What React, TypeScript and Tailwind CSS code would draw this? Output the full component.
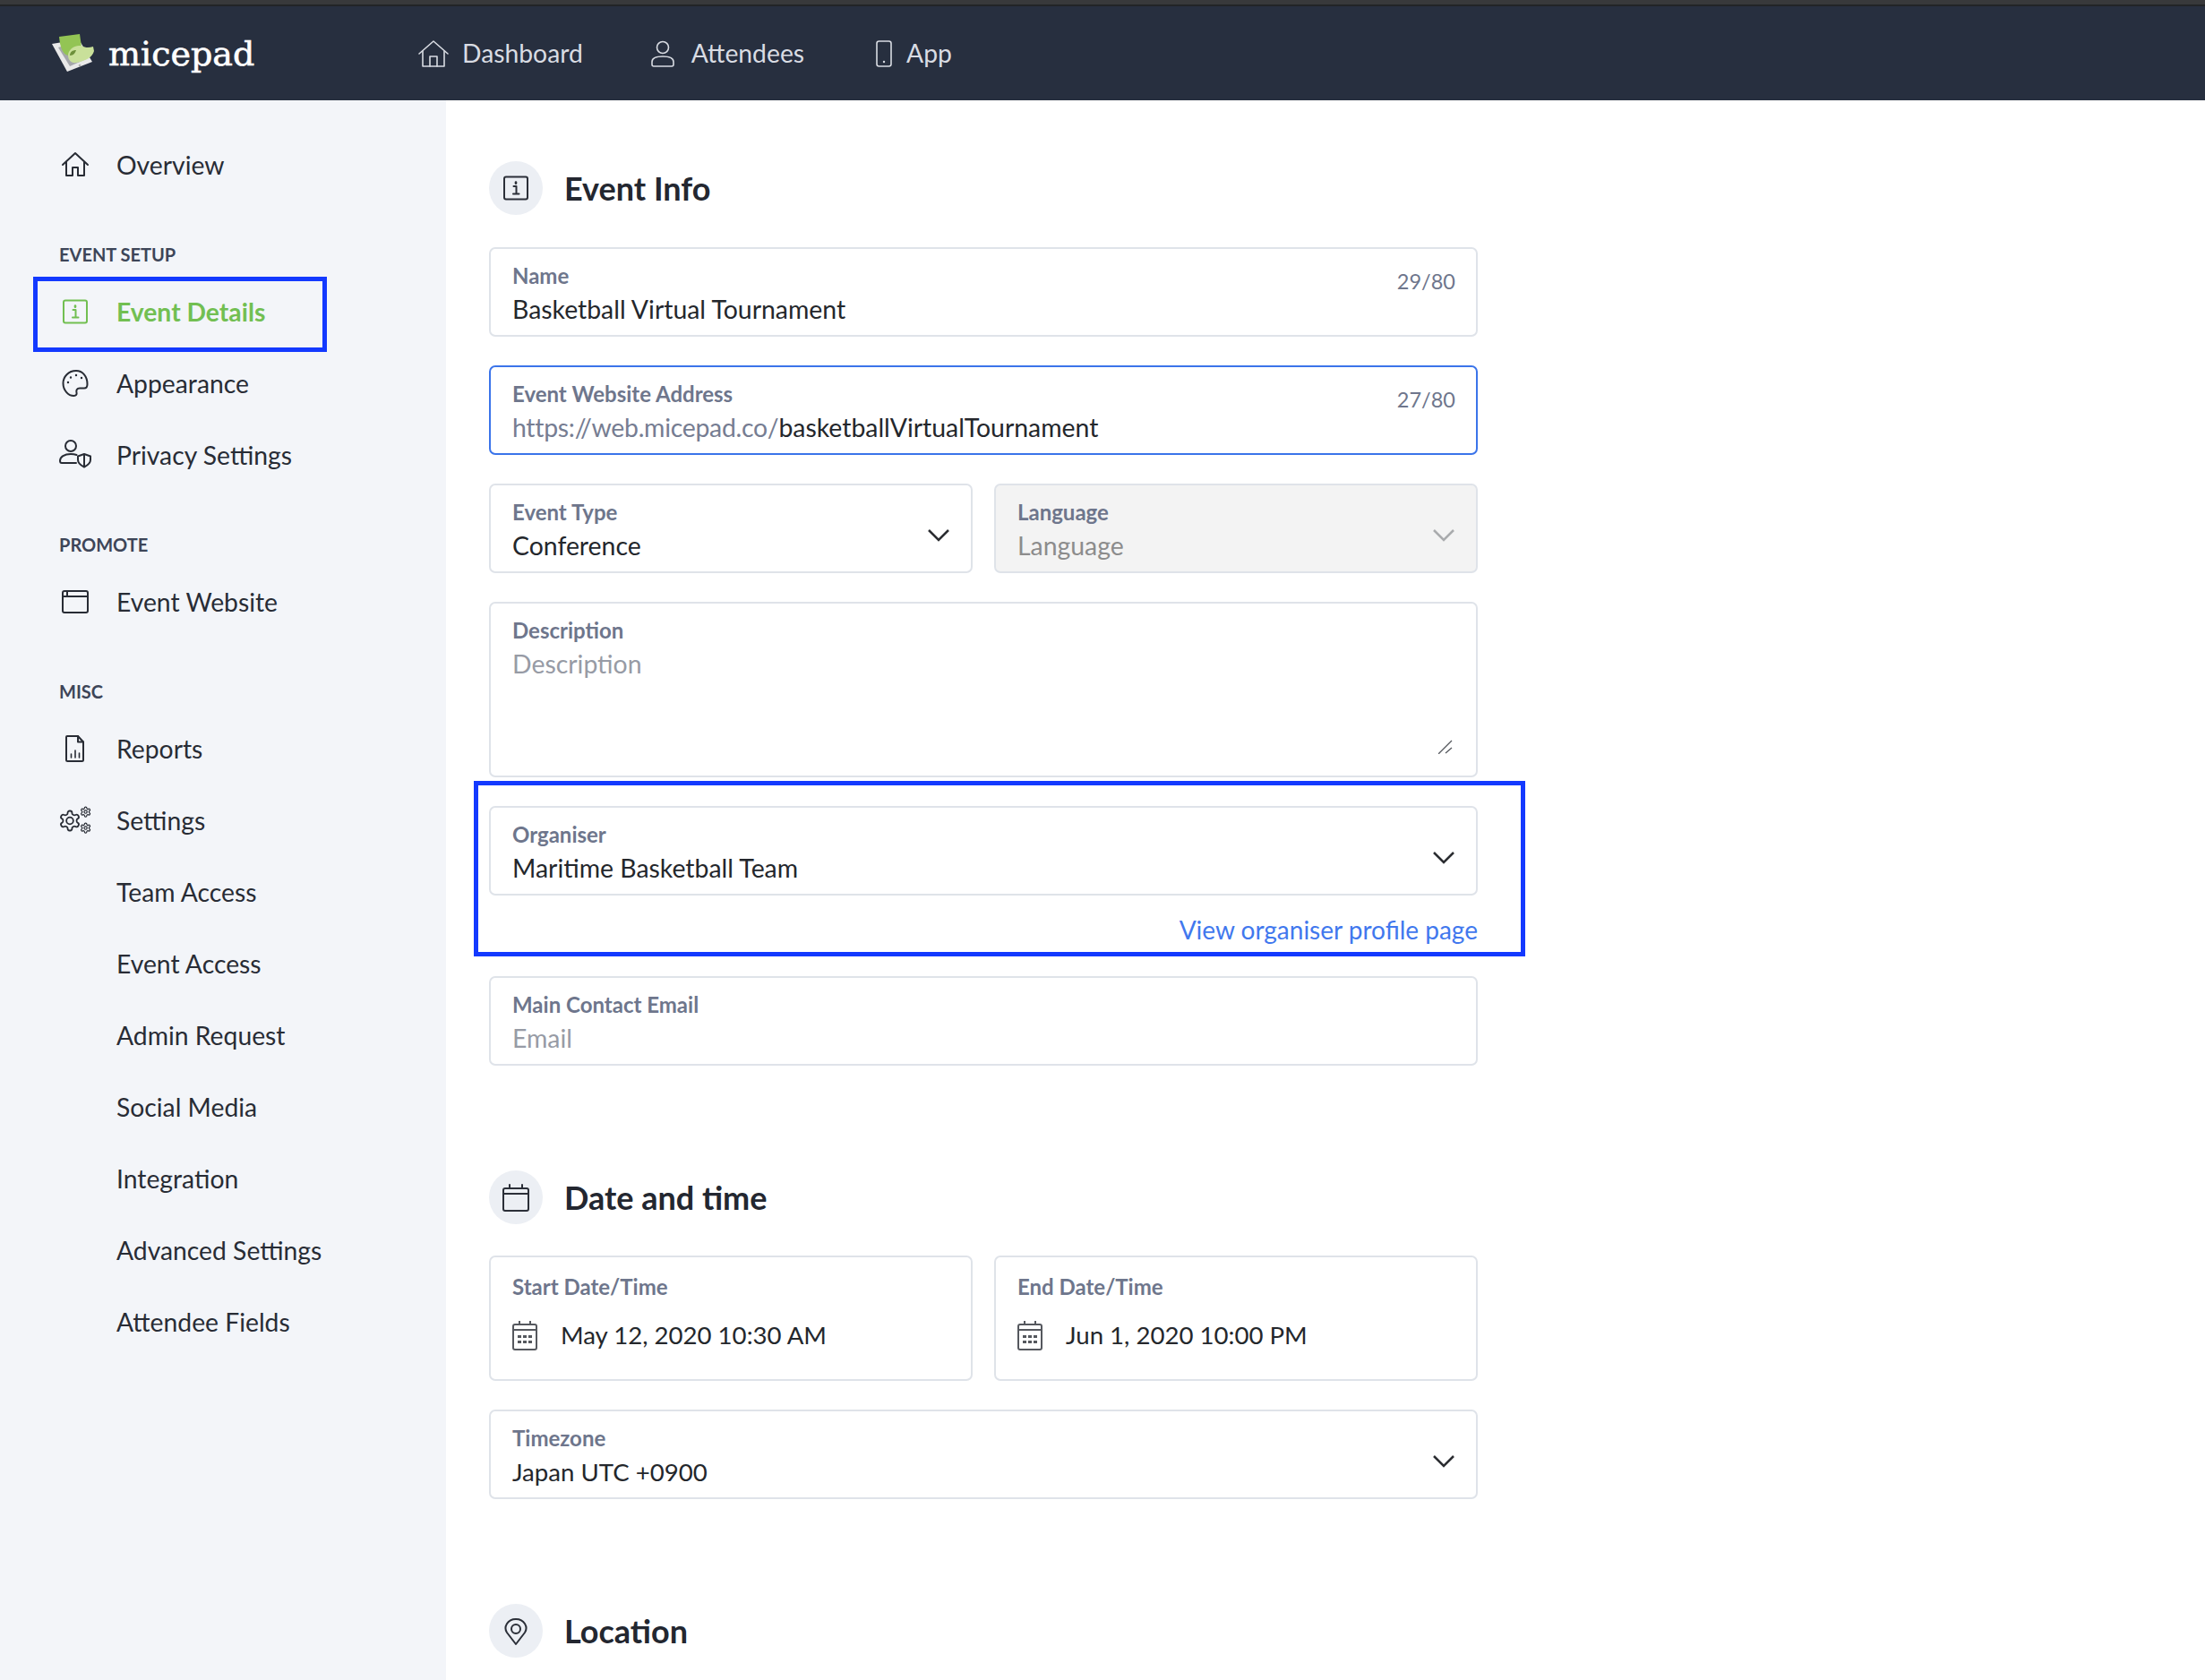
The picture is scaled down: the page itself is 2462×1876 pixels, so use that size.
import type { ReactNode } from "react";

const stroke = {
  fill: "none",
  stroke: "currentColor",
  strokeWidth: 2,
  strokeLinecap: "round" as const,
  strokeLinejoin: "round" as const,
};

const gearPath =
  "M12.22 2h-.44a2 2 0 0 0-2 2v.18a2 2 0 0 1-1 1.73l-.43.25a2 2 0 0 1-2 0l-.15-.08a2 2 0 0 0-2.73.73l-.22.38a2 2 0 0 0 .73 2.73l.15.1a2 2 0 0 1 1 1.72v.51a2 2 0 0 1-1 1.74l-.15.09a2 2 0 0 0-.73 2.73l.22.38a2 2 0 0 0 2.73.73l.15-.08a2 2 0 0 1 2 0l.43.25a2 2 0 0 1 1 1.73V20a2 2 0 0 0 2 2h.44a2 2 0 0 0 2-2v-.18a2 2 0 0 1 1-1.73l.43-.25a2 2 0 0 1 2 0l.15.08a2 2 0 0 0 2.73-.73l.22-.39a2 2 0 0 0-.73-2.73l-.15-.08a2 2 0 0 1-1-1.74v-.5a2 2 0 0 1 1-1.74l.15-.09a2 2 0 0 0 .73-2.73l-.22-.38a2 2 0 0 0-2.73-.73l-.15.08a2 2 0 0 1-2 0l-.43-.25a2 2 0 0 1-1-1.73V4a2 2 0 0 0-2-2z";

function Icon36({ children }: { children: ReactNode }) {
  return (
    <svg viewBox="0 0 36 36" className="w-9 h-9 shrink-0" {...stroke}>
      {children}
    </svg>
  );
}

const HomeIcon = () => (
  <Icon36>
    <path d="M4 18 18 5l14 13" />
    <path d="M8 15v15h7v-9h6v9h7V15" />
  </Icon36>
);

// header variant: thinner, bigger roof, small door
const NavHomeIcon = () => (
  <svg viewBox="0 0 36 36" className="w-9 h-9 shrink-0" {...stroke} strokeWidth={1.6}>
    <path d="M2 18 18 4l16 14" />
    <path d="M6 15v17h24V15" />
    <path d="M14 32V21h8v11" />
  </svg>
);

const InfoIcon = () => (
  <Icon36>
    <rect x="5" y="5.500" width="26" height="25" rx="2" />
    <path d="M15.500 16h3v8.500M15 24.500h6.500" />
    <path d="M18 11.500v1.200" strokeWidth="2.600" />
  </Icon36>
);

const PaletteIcon = () => (
  <Icon36>
    <path d="M19 4C10.500 4 4.500 10.500 4.500 18c0 7.500 5.500 14 12 14 2.500 0 3.500-1.700 3-3.500-.7-2.500.3-5 3.500-5h5c2 0 3.500-1.500 3.500-4.500C31.500 10 26 4 19 4z" />
    <path d="M10 17v.1M13 11.500v.1M19 9v.1M25 12v.1" strokeWidth="2.400" />
  </Icon36>
);

const PrivacyIcon = () => (
  <Icon36>
    <circle cx="13" cy="8" r="6" />
    <path d="M19 27H3c-1.500 0-2-1-2-2.500C1 20 6 17 13 17c2.500 0 4.500.3 6.500 1" />
    <path d="M28 17l7 2.500v4c0 3.500-3 6-7 8-4-2-7-4.500-7-8v-4z" />
    <path d="M28 18v13" />
  </Icon36>
);

const BrowserIcon = () => (
  <Icon36>
    <rect x="4" y="6" width="28" height="24" rx="2" />
    <path d="M4 12h28M9 6v6" />
  </Icon36>
);

const ReportIcon = () => (
  <Icon36>
    <path d="M9 4h12l6 6.500V30.500a1.500 1.500 0 0 1-1.500 1.500h-16A1.500 1.500 0 0 1 8 30.500V5a1 1 0 0 1 1-1z" />
    <path d="M21 4v6.500h6" />
    <path d="M13.500 28v-4M18 28v-8M22.500 28v-5" strokeWidth="1.600" />
  </Icon36>
);

const Gear = ({ x, y, s, r, w }: { x: number; y: number; s: number; r: number; w: number }) => (
  <g transform={`translate(${x} ${y}) scale(${s})`} strokeWidth={w / s}>
    <path d={gearPath} />
    <circle cx="12" cy="12" r={r} />
  </g>
);

const SettingsIcon = () => (
  <Icon36>
    <Gear x={-1.200} y={5.300} s={1.100} r={3.500} w={1.800} />
    <Gear x={23} y={2} s={0.550} r={3} w={1.200} />
    <Gear x={23} y={20} s={0.550} r={3} w={1.200} />
  </Icon36>
);

const CalendarOutline = () => (
  <Icon36>
    <rect x="4" y="8" width="28" height="25" rx="2" />
    <path d="M4 14h28M11 4v4M25 4v4" />
  </Icon36>
);

const PinIcon = () => (
  <Icon36>
    <path d="M18 33 8 20c-4-6 .5-15 10-15s14 9 10 15z" />
    <circle cx="18" cy="16" r="5" />
  </Icon36>
);

const PersonIcon = () => (
  <svg viewBox="0 0 36 36" className="w-9 h-9 shrink-0" {...stroke} strokeWidth={1.6}>
    <circle cx="18" cy="11" r="6.500" />
    <path d="M8 32h20a2 2 0 0 0 2-2v-3c0-3.500-3-6-12-6S6 23.500 6 27v3a2 2 0 0 0 2 2z" />
  </svg>
);

const PhoneIcon = () => (
  <svg viewBox="0 0 36 36" className="w-9 h-9 shrink-0" {...stroke} strokeWidth={1.6}>
    <rect x="10" y="4" width="16" height="28" rx="2.500" />
    <path d="M18 27v.1" strokeWidth="2.400" />
  </svg>
);

function Chevron({ muted }: { muted?: boolean }) {
  return (
    <svg
      viewBox="0 0 26 16"
      className={`w-[26px] h-4 ${muted ? "text-[#a9abad]" : "text-[#2b2d31]"}`}
      fill="none"
      stroke="currentColor"
      strokeWidth="2.500"
    >
      <path d="M2 3l11 11L24 3" />
    </svg>
  );
}

function DateGlyph() {
  return (
    <svg viewBox="0 0 28 34" className="w-7 h-[34px] shrink-0 text-[#55585e]" fill="none" stroke="currentColor" strokeWidth="2">
      <rect x="1" y="5" width="26" height="28" rx="2" />
      <path d="M1 11h26M8 1v4M20 1v4" />
      <path
        d="M6 17h4v3H6zM12 17h4v3h-4zM18 17h4v3h-4zM6 23h4v3H6zM12 23h4v3h-4zM18 23h4v3h-4z"
        fill="currentColor"
        stroke="none"
      />
    </svg>
  );
}

function Logo() {
  return (
    <svg viewBox="0 0 48 44" className="w-12 h-11 shrink-0">
      <path d="M0 11 17 42 45 31 30 6z" fill="#e9e9e9" />
      <path d="M7 15 20 36 38 28 26 9z" fill="#a5a7ab" />
      <circle cx="31" cy="35" r="1.300" fill="#b0b0b0" />
      <path d="M8 3 31 0l2 14c-9-1-14 3-14 10C12 24 9 14 8 3z" fill="#93c454" />
      <path d="M33 13c5 3 9 2 13 1l1 5c-2 7-9 11-20 13-5 1-9-3-9-8 0-6 6-12 15-11z" fill="#c9e09a" />
      <path d="M20 24c0-4 3-6 7-6-1 3-3 6-7 6z" fill="#6d8f3a" />
    </svg>
  );
}

function Box({ children, className = "" }: { children: ReactNode; className?: string }) {
  return <div className={`relative border-2 border-[#dfe3e9] rounded-[7px] bg-white ${className}`}>{children}</div>;
}

function Field({
  label,
  value,
  placeholder,
  counter,
  select,
  focused,
  disabled,
  children,
}: {
  label: string;
  value?: string;
  placeholder?: string;
  counter?: string;
  select?: boolean;
  focused?: boolean;
  disabled?: boolean;
  children?: ReactNode;
}) {
  return (
    <div
      className={`relative h-[100px] border-2 rounded-[7px] pl-[24px] pr-[23px] pt-[14px] ${
        focused ? "border-[#3b74ea]" : "border-[#dfe3e9]"
      } ${disabled ? "bg-[#f3f3f3]" : "bg-white"}`}
    >
      <div className="text-[24px] leading-[32px] font-bold text-[#6e768c]">{label}</div>
      <div
        className={`text-[28.400px] leading-[43px] whitespace-nowrap ${
          placeholder ? (disabled ? "text-[#8c8c8c]" : "text-[#979ba5]") : "text-[#24272c]"
        }`}
      >
        {children ?? value ?? placeholder}
      </div>
      {counter && <div className="absolute right-[23px] top-[20px] text-[23.500px] leading-[32px] text-[#6e768c]">{counter}</div>}
      {select && (
        <div className="absolute right-[23px] top-[47px]">
          <Chevron muted={disabled} />
        </div>
      )}
    </div>
  );
}

function DateField({ label, value }: { label: string; value: string }) {
  return (
    <Box className="h-[140px] pl-[24px] pt-[17px]">
      <div className="text-[24px] leading-[32px] font-bold text-[#6e768c]">{label}</div>
      <div className="flex items-center gap-[26px] mt-[16px]">
        <DateGlyph />
        <span className="text-[27.600px] leading-[44px] text-[#24272c]">{value}</span>
      </div>
    </Box>
  );
}

function SectionTitle({ icon, title }: { icon: ReactNode; title: string }) {
  return (
    <div className="flex items-center gap-[24px] h-[60px]">
      <div className="w-[60px] h-[60px] rounded-full bg-[#eceff4] flex items-center justify-center text-[#2b2f38]">{icon}</div>
      <h2 className="text-[36px] leading-[60px] font-bold text-[#232730]">{title}</h2>
    </div>
  );
}

function SideItem({ icon, label, active }: { icon?: ReactNode; label: string; active?: boolean }) {
  return (
    <div className={`h-20 pl-[66px] flex items-center gap-[28px] text-[28.300px] ${active ? "text-[#72bf52] font-bold" : "text-[#282c35]"}`}>
      {icon ?? <span className="w-9 shrink-0" />}
      <span>{label}</span>
    </div>
  );
}

function SideLabel({ children }: { children: string }) {
  return <div className="mt-[47px] mb-[11px] pl-[66px] text-[20px] leading-[26px] font-bold text-[#3d4558]">{children}</div>;
}

function NavLink({ icon, label, className = "gap-[14px]" }: { icon: ReactNode; label: string; className?: string }) {
  return (
    <div className={`flex items-center text-[28.300px] text-[#d9dce3] ${className}`}>
      {icon}
      <span>{label}</span>
    </div>
  );
}

export default function App() {
  return (
    <div className="h-[1876px] overflow-hidden flex flex-col bg-white font-['Lato',sans-serif]">
      <div className="h-[7px] bg-[#38393b] border-b-2 border-[#222427]" />
      <header className="h-[105px] bg-[#272f3f] flex items-center pl-[58px]">
        <div className="flex items-center gap-[15px] w-[408px]">
          <Logo />
          <span className="font-['DejaVu_Serif',serif] text-[38px] leading-none text-white [-webkit-text-stroke:0.6px_white]">micepad</span>
        </div>
        <nav className="flex items-center gap-[71px]">
          <NavLink icon={<NavHomeIcon />} label="Dashboard" />
          <NavLink icon={<PersonIcon />} label="Attendees" />
          <NavLink icon={<PhoneIcon />} label="App" className="gap-[7px]" />
        </nav>
      </header>

      <div className="flex flex-1 min-h-0">
        <aside className="w-[498px] shrink-0 bg-[#f3f5f9] pt-[32px]">
          <SideItem icon={<HomeIcon />} label="Overview" />
          <SideLabel>EVENT SETUP</SideLabel>
          <div className="relative">
            <SideItem icon={<InfoIcon />} label="Event Details" active />
            <div className="absolute left-[37px] top-px w-[328px] h-[84px] border-[5px] border-[#1339ff]" />
          </div>
          <SideItem icon={<PaletteIcon />} label="Appearance" />
          <SideItem icon={<PrivacyIcon />} label="Privacy Settings" />
          <SideLabel>PROMOTE</SideLabel>
          <SideItem icon={<BrowserIcon />} label="Event Website" />
          <SideLabel>MISC</SideLabel>
          <SideItem icon={<ReportIcon />} label="Reports" />
          <SideItem icon={<SettingsIcon />} label="Settings" />
          <SideItem label="Team Access" />
          <SideItem label="Event Access" />
          <SideItem label="Admin Request" />
          <SideItem label="Social Media" />
          <SideItem label="Integration" />
          <SideItem label="Advanced Settings" />
          <SideItem label="Attendee Fields" />
        </aside>

        <main className="w-[1104px] ml-[48px] pt-[68px]">
          <SectionTitle icon={<InfoIcon />} title="Event Info" />
          <div className="mt-[36px] flex flex-col gap-[32px]">
            <Field label="Name" value="Basketball Virtual Tournament" counter="29/80" />
            <Field label="Event Website Address" counter="27/80" focused>
              <span className="text-[#767d92] tracking-[-0.270px]">https://web.micepad.co/</span>basketballVirtualTournament
            </Field>
            <div className="grid grid-cols-2 gap-[24px]">
              <Field label="Event Type" value="Conference" select />
              <Field label="Language" placeholder="Language" select disabled />
            </div>
            <Box className="h-[196px] pl-[24px] pt-[14px]">
              <div className="text-[24px] leading-[32px] font-bold text-[#6e768c]">Description</div>
              <div className="text-[28.400px] leading-[43px] text-[#979ba5]">Description</div>
              <svg viewBox="0 0 16 16" className="absolute right-[26px] bottom-[24px] w-4 h-4" fill="none" stroke="#55585e" strokeWidth="1.300">
                <path d="M0 16 15 1M8 15l7-6" />
              </svg>
            </Box>
            <div className="relative">
              <Field label="Organiser" value="Maritime Basketball Team" select />
              <div className="mt-[19px] h-[39px] text-right text-[28px] leading-[38px] text-[#4178ee]">View organiser profile page</div>
              <div className="absolute -left-[17px] -right-[53px] -top-[28px] -bottom-[10px] border-[5px] border-[#1339ff]" />
            </div>
            <Field label="Main Contact Email" placeholder="Email" />
          </div>

          <div className="mt-[117px]">
            <SectionTitle icon={<CalendarOutline />} title="Date and time" />
          </div>
          <div className="mt-[35px] flex flex-col gap-[32px]">
            <div className="grid grid-cols-2 gap-[24px]">
              <DateField label="Start Date/Time" value="May 12, 2020 10:30 AM" />
              <DateField label="End Date/Time" value="Jun 1, 2020 10:00 PM" />
            </div>
            <Field label="Timezone" select>
              <span className="text-[27.600px]">Japan UTC +0900</span>
            </Field>
          </div>

          <div className="mt-[117px]">
            <SectionTitle icon={<PinIcon />} title="Location" />
          </div>
        </main>
      </div>
    </div>
  );
}
